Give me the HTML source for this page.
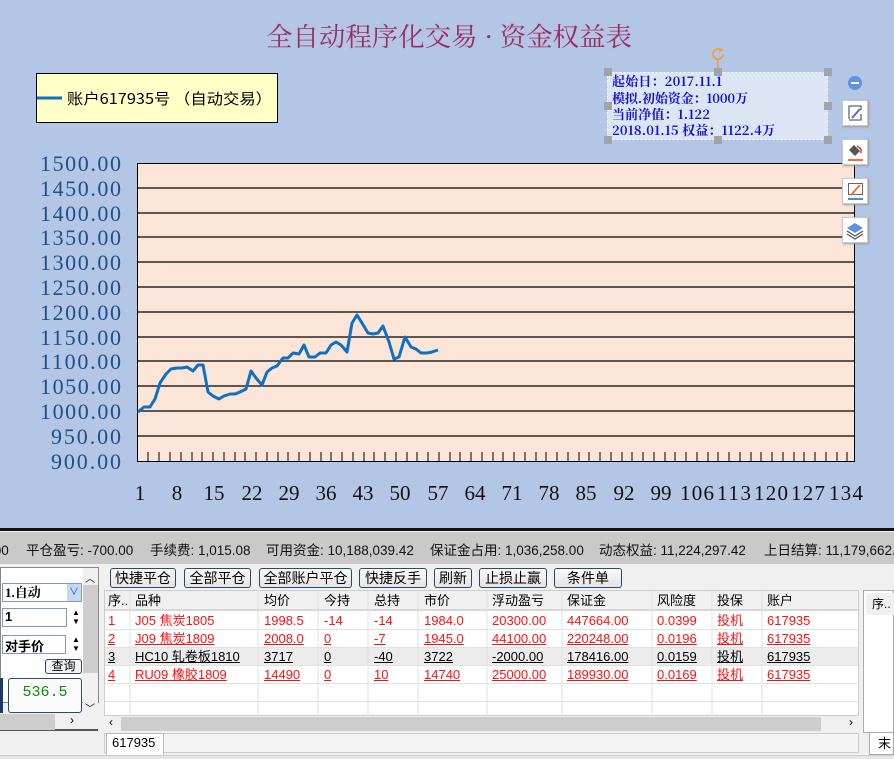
<!DOCTYPE html>
<html><head><meta charset="utf-8"><style>
*{margin:0;padding:0;box-sizing:border-box}
body{width:894px;height:759px;overflow:hidden;background:#b3c6e6;position:relative;font-family:"Liberation Sans","Noto Sans CJK SC",sans-serif}
.a{position:absolute}
.btn{position:absolute;top:568px;height:20px;border:1px solid #2a4a6a;border-radius:3px;background:linear-gradient(#fafafa,#e4e4e4);font-size:14px;text-align:center;line-height:18px;color:#000}
.c{position:absolute;font-size:13px;line-height:18px;white-space:nowrap}
.r{color:#ff1010}
.u{text-decoration:underline}
.sb{position:absolute;width:26px;height:26px;background:#fff;border:1px solid #c8c8c8;box-shadow:1px 1px 2px #999}
</style></head><body>
<svg class="a" style="left:0;top:0" width="894" height="531" viewBox="0 0 894 531">
<text x="266" y="46" textLength="366" lengthAdjust="spacingAndGlyphs" font-family="Noto Serif CJK SC,serif" font-size="26" fill="#9c2d62">全自动程序化交易 · 资金权益表</text>
<rect x="36.5" y="73.5" width="241" height="49" fill="#ffffc8" stroke="#000"/>
<line x1="37" y1="98" x2="62" y2="98" stroke="#0f6fc0" stroke-width="3"/>
<text x="67" y="104" textLength="205" lengthAdjust="spacingAndGlyphs" font-family="Noto Sans CJK SC,sans-serif" font-size="15" fill="#000">账户617935号 （自动交易）</text>
<rect x="137.5" y="163.5" width="717" height="298" fill="#fbe5d8" stroke="#000"/>
<g stroke="#000" stroke-width="1.3">
<line x1="137" y1="188" x2="855" y2="188"/><line x1="137" y1="213" x2="855" y2="213"/><line x1="137" y1="237" x2="855" y2="237"/><line x1="137" y1="262" x2="855" y2="262"/><line x1="137" y1="287" x2="855" y2="287"/><line x1="137" y1="312" x2="855" y2="312"/><line x1="137" y1="337" x2="855" y2="337"/><line x1="137" y1="361" x2="855" y2="361"/><line x1="137" y1="386" x2="855" y2="386"/><line x1="137" y1="411" x2="855" y2="411"/><line x1="137" y1="436" x2="855" y2="436"/>
</g>
<path stroke="#000" stroke-width="1" d="M148 452V461M159 452V461M170 452V461M181 452V461M192 452V461M202 452V461M213 452V461M224 452V461M235 452V461M245 452V461M256 452V461M267 452V461M278 452V461M288 452V461M299 452V461M310 452V461M321 452V461M331 452V461M342 452V461M353 452V461M364 452V461M374 452V461M385 452V461M396 452V461M407 452V461M417 452V461M428 452V461M439 452V461M450 452V461M460 452V461M471 452V461M482 452V461M493 452V461M503 452V461M514 452V461M525 452V461M536 452V461M546 452V461M557 452V461M568 452V461M579 452V461M589 452V461M600 452V461M611 452V461M622 452V461M632 452V461M643 452V461M654 452V461M665 452V461M675 452V461M686 452V461M697 452V461M708 452V461M718 452V461M729 452V461M740 452V461M751 452V461M761 452V461M772 452V461M783 452V461M794 452V461M804 452V461M815 452V461M826 452V461M837 452V461M847 452V461"/>
<polyline fill="none" stroke="#0f6fc0" stroke-width="3" stroke-linejoin="round" points="138,412 144,407 150,407 155,399 160,383 166,374 171,369 177,368 182,368 187,367 193,371 198,365 203,365 208,392 213,396 219,399 224,396 230,394 235,394 240,392 246,389 251,371 256,378 262,385 267,372 272,368 277,366 283,358 288,358 293,353 299,354 304,345 309,357 315,357 320,353 326,353 331,345 336,342 341,345 347,352 352,323 357,315 362,323 368,333 373,334 378,333 383,326 389,342 394,359 399,357 405,337 411,347 416,349 421,353 427,353 432,352 438,350"/>
<g font-family="Liberation Serif,serif" font-size="22" fill="#1f4f88" lengthAdjust="spacingAndGlyphs">
<text x="40" y="171" textLength="81">1500.00</text><text x="40" y="196" textLength="81">1450.00</text><text x="40" y="221" textLength="81">1400.00</text><text x="40" y="245" textLength="81">1350.00</text><text x="40" y="270" textLength="81">1300.00</text><text x="40" y="295" textLength="81">1250.00</text><text x="40" y="320" textLength="81">1200.00</text><text x="40" y="345" textLength="81">1150.00</text><text x="40" y="369" textLength="81">1100.00</text><text x="40" y="394" textLength="81">1050.00</text><text x="40" y="419" textLength="81">1000.00</text><text x="51" y="444" textLength="70">950.00</text><text x="51" y="469" textLength="70">900.00</text>
</g>
<g font-family="Liberation Serif,serif" font-size="21" fill="#111" text-anchor="middle">
<text x="140" y="500">1</text><text x="177" y="500">8</text><text x="214" y="500">15</text><text x="252" y="500">22</text><text x="289" y="500">29</text><text x="326" y="500">36</text><text x="363" y="500">43</text><text x="400" y="500">50</text><text x="438" y="500">57</text><text x="475" y="500">64</text><text x="512" y="500">71</text><text x="549" y="500">78</text><text x="586" y="500">85</text><text x="624" y="500">92</text><text x="661" y="500">99</text>
</g>
<g font-family="Liberation Serif,serif" font-size="21" fill="#111" lengthAdjust="spacingAndGlyphs">
<text x="680" y="500" textLength="34">106</text><text x="717" y="500" textLength="34">113</text><text x="754" y="500" textLength="34">120</text><text x="791" y="500" textLength="34">127</text><text x="829" y="500" textLength="34">134</text>
</g>
<rect x="607.5" y="72.5" width="220" height="67" fill="#dce5f3" stroke="#fff" stroke-dasharray="2,2"/>
<g fill="#a0a3aa"><rect x="604" y="68" width="8" height="8"/><rect x="714" y="68" width="8" height="8"/><rect x="824" y="68" width="8" height="8"/><rect x="604" y="102" width="8" height="8"/><rect x="824" y="102" width="8" height="8"/><rect x="604" y="136" width="8" height="8"/><rect x="714" y="136" width="8" height="8"/><rect x="824" y="136" width="8" height="8"/></g>
<line x1="718" y1="60" x2="718" y2="68" stroke="#f0a030" stroke-width="1.5"/>
<path d="M723 54a5 5 0 1 1-2-4" fill="none" stroke="#f0a030" stroke-width="1.8"/><path d="M719 48l3 2-3 2" fill="none" stroke="#f0a030" stroke-width="1.5"/>
<g font-family="Noto Serif CJK SC,serif" font-size="13" font-weight="bold" fill="#1010e0" lengthAdjust="spacingAndGlyphs">
<text x="612" y="86" textLength="110">起始日：2017.11.1</text><text x="612" y="103" textLength="136">模拟.初始资金：1000万</text><text x="612" y="119" textLength="98">当前净值：1.122</text><text x="612" y="135" textLength="163">2018.01.15 权益：1122.4万</text>
</g>
<circle cx="855" cy="83" r="7" fill="#5d96e0"/><rect x="851" y="82" width="8" height="2" fill="#fff"/>
<rect x="0" y="528" width="894" height="3" fill="#111"/>
</svg>
<div class="sb" style="left:842px;top:100px"><svg width="24" height="24"><path d="M6 18V5h12v4M6 19h12V13" fill="none" stroke="#666" stroke-width="1.3"/><path d="M9 17l8-9" stroke="#4a6fd0" stroke-width="2"/></svg></div>
<div class="sb" style="left:842px;top:139px"><svg width="24" height="24"><path d="M6 10l5-5 6 6-5 5z" fill="#555"/><path d="M14 6l4 3v4" fill="none" stroke="#d04040" stroke-width="1.5"/><rect x="5" y="19" width="15" height="2" fill="#f07030"/></svg></div>
<div class="sb" style="left:842px;top:178px"><svg width="24" height="24"><rect x="5.5" y="4.5" width="14" height="11" fill="none" stroke="#666"/><path d="M8 16l9-10" stroke="#f07030" stroke-width="2"/><rect x="5" y="19" width="15" height="2" fill="#4a90d0"/></svg></div>
<div class="sb" style="left:842px;top:217px"><svg width="24" height="24"><path d="M12 5l8 5-8 5-8-5z" fill="#5d90e0"/><path d="M4 13l8 5 8-5M4 16l8 5 8-5" fill="none" stroke="#555" stroke-width="1.3"/></svg></div>

<div class="a" style="left:0;top:531px;width:894px;height:228px;background:#f0f0f0"></div>
<div class="a" style="left:0;top:532px;width:894px;height:32px;background:#c9c9c9;font-size:13.5px;line-height:38px;white-space:nowrap;color:#111">
<span class="a" style="left:-10px">.00</span><span class="a" style="left:26px">平仓盈亏: -700.00</span><span class="a" style="left:150px">手续费: 1,015.08</span><span class="a" style="left:266px">可用资金: 10,188,039.42</span><span class="a" style="left:430px">保证金占用: 1,036,258.00</span><span class="a" style="left:599px">动态权益: 11,224,297.42</span><span class="a" style="left:764px">上日结算: 11,179,662.</span></div>
<div class="a" style="left:0;top:567px;width:99px;height:136px;border:1px solid #888;background:#fff"></div>
<div class="a" style="left:2px;top:583px;width:80px;height:19px;border:1px solid #7a9cc0;background:#fff;font-size:13px;font-weight:bold;font-family:'Liberation Serif','Noto Serif CJK SC',serif;padding-left:2px;line-height:17px">1.自动</div>
<div class="a" style="left:67px;top:584px;width:14px;height:17px;background:#c6d6f4;color:#3050a0;font-size:10px;text-align:center;line-height:17px">∨</div>
<div class="a" style="left:2px;top:608px;width:65px;height:19px;border:1px solid #7a9cc0;background:#fff;font-size:13px;font-weight:bold;padding-left:2px">1</div>
<div class="a" style="left:2px;top:635px;width:64px;height:19px;border:1px solid #7a9cc0;background:#fff;font-size:13px;font-weight:bold;padding-left:2px">对手价</div>
<div class="a" style="left:72px;top:608px;width:8px;height:20px;font-size:8px;line-height:9px">▲<br>▼</div>
<div class="a" style="left:72px;top:635px;width:8px;height:20px;font-size:8px;line-height:9px">▲<br>▼</div>
<div class="a" style="left:45px;top:659px;width:37px;height:15px;border:1px solid #2a4a6a;border-radius:3px;background:#f4f4f4;font-size:12px;text-align:center;line-height:13px">查询</div>
<div class="a" style="left:8px;top:678px;width:74px;height:35px;border:1px solid #2a4a6a;border-radius:3px;background:#fafafa;color:#108a10;font-family:'Liberation Mono',monospace;font-size:15px;text-align:center;line-height:28px">536.5</div>
<div class="a" style="left:0;top:678px;width:3px;height:35px;background:#1a3a6a"></div>
<div class="a" style="left:83px;top:568px;width:15px;height:145px;background:#f0f0f0"></div>
<div class="a" style="left:83px;top:585px;width:15px;height:88px;background:#cdcdcd"></div>
<div class="a" style="left:85px;top:570px;font-size:10px">︿</div><div class="a" style="left:85px;top:700px;font-size:10px">﹀</div>
<div class="a" style="left:0;top:713px;width:98px;height:18px;background:#f0f0f0;border-bottom:2px solid #555"></div>
<div class="a" style="left:0;top:714px;width:55px;height:16px;background:#cdcdcd"></div>
<div class="a" style="left:70px;top:713px;font-size:12px">›</div>
<div class="btn" style="left:110px;width:66px">快捷平仓</div>
<div class="btn" style="left:184px;width:67px">全部平仓</div>
<div class="btn" style="left:259px;width:93px">全部账户平仓</div>
<div class="btn" style="left:359px;width:68px">快捷反手</div>
<div class="btn" style="left:434px;width:38px">刷新</div>
<div class="btn" style="left:479px;width:68px">止损止赢</div>
<div class="btn" style="left:554px;width:68px">条件单</div>
<div class="a" style="left:104px;top:590px;width:755px;height:126px;background:#fff;border:1px solid #ccc"></div>
<div class="a" style="left:105px;top:591px;width:753px;height:20px;background:#f0f0f0;border-bottom:2px solid #d8d8d8"></div>
<div class="a" style="left:105px;top:647px;width:753px;height:18px;background:#ececec"></div>
<svg class="a" style="left:0;top:0" width="894" height="759"><g stroke="#e2e2e2"><line x1="130" y1="591" x2="130" y2="716"/><line x1="258" y1="591" x2="258" y2="716"/><line x1="318" y1="591" x2="318" y2="716"/><line x1="368" y1="591" x2="368" y2="716"/><line x1="418" y1="591" x2="418" y2="716"/><line x1="487" y1="591" x2="487" y2="716"/><line x1="562" y1="591" x2="562" y2="716"/><line x1="652" y1="591" x2="652" y2="716"/><line x1="712" y1="591" x2="712" y2="716"/><line x1="762" y1="591" x2="762" y2="716"/><line x1="105" y1="629.5" x2="858" y2="629.5"/><line x1="105" y1="647.5" x2="858" y2="647.5"/><line x1="105" y1="665.5" x2="858" y2="665.5"/><line x1="105" y1="683.5" x2="858" y2="683.5"/><line x1="105" y1="701.5" x2="858" y2="701.5"/></g></svg>
<div class="c" style="left:108px;top:592px">序..</div><div class="c" style="left:135px;top:592px">品种</div><div class="c" style="left:264px;top:592px">均价</div><div class="c" style="left:324px;top:592px">今持</div><div class="c" style="left:374px;top:592px">总持</div><div class="c" style="left:424px;top:592px">市价</div><div class="c" style="left:492px;top:592px">浮动盈亏</div><div class="c" style="left:567px;top:592px">保证金</div><div class="c" style="left:657px;top:592px">风险度</div><div class="c" style="left:717px;top:592px">投保</div><div class="c" style="left:767px;top:592px">账户</div>

<div class="c r" style="left:108px;top:612px">1</div><div class="c r" style="left:135px;top:612px">J05 焦炭1805</div><div class="c r" style="left:264px;top:612px">1998.5</div><div class="c r" style="left:324px;top:612px">-14</div><div class="c r" style="left:374px;top:612px">-14</div><div class="c r" style="left:424px;top:612px">1984.0</div><div class="c r" style="left:492px;top:612px">20300.00</div><div class="c r" style="left:567px;top:612px">447664.00</div><div class="c r" style="left:657px;top:612px">0.0399</div><div class="c r" style="left:717px;top:612px">投机</div><div class="c r" style="left:767px;top:612px">617935</div>

<div class="c r u" style="left:108px;top:630px">2</div><div class="c r u" style="left:135px;top:630px">J09 焦炭1809</div><div class="c r u" style="left:264px;top:630px">2008.0</div><div class="c r u" style="left:324px;top:630px">0</div><div class="c r u" style="left:374px;top:630px">-7</div><div class="c r u" style="left:424px;top:630px">1945.0</div><div class="c r u" style="left:492px;top:630px">44100.00</div><div class="c r u" style="left:567px;top:630px">220248.00</div><div class="c r u" style="left:657px;top:630px">0.0196</div><div class="c r u" style="left:717px;top:630px">投机</div><div class="c r u" style="left:767px;top:630px">617935</div>

<div class="c u" style="left:108px;top:648px">3</div><div class="c u" style="left:135px;top:648px">HC10 轧卷板1810</div><div class="c u" style="left:264px;top:648px">3717</div><div class="c u" style="left:324px;top:648px">0</div><div class="c u" style="left:374px;top:648px">-40</div><div class="c u" style="left:424px;top:648px">3722</div><div class="c u" style="left:492px;top:648px">-2000.00</div><div class="c u" style="left:567px;top:648px">178416.00</div><div class="c u" style="left:657px;top:648px">0.0159</div><div class="c u" style="left:717px;top:648px">投机</div><div class="c u" style="left:767px;top:648px">617935</div>

<div class="c r u" style="left:108px;top:666px">4</div><div class="c r u" style="left:135px;top:666px">RU09 橡胶1809</div><div class="c r u" style="left:264px;top:666px">14490</div><div class="c r u" style="left:324px;top:666px">0</div><div class="c r u" style="left:374px;top:666px">10</div><div class="c r u" style="left:424px;top:666px">14740</div><div class="c r u" style="left:492px;top:666px">25000.00</div><div class="c r u" style="left:567px;top:666px">189930.00</div><div class="c r u" style="left:657px;top:666px">0.0169</div><div class="c r u" style="left:717px;top:666px">投机</div><div class="c r u" style="left:767px;top:666px">617935</div>

<div class="a" style="left:104px;top:716px;width:755px;height:16px;background:#f0f0f0"></div>
<div class="a" style="left:121px;top:717px;width:700px;height:14px;background:#cdcdcd"></div>
<div class="a" style="left:109px;top:715px;font-size:12px">‹</div><div class="a" style="left:849px;top:715px;font-size:12px">›</div>
<div class="a" style="left:104px;top:733px;width:755px;height:20px;border:1px solid #ccc;background:#f4f4f4"></div>
<div class="a" style="left:106px;top:733px;width:58px;height:22px;background:#fff;border:1px solid #bbb;border-bottom:none;font-size:13px;line-height:18px;padding-left:5px">617935</div>
<div class="a" style="left:863px;top:590px;width:31px;height:143px;border:1px solid #aaa;background:#fff"></div>
<div class="a" style="left:866px;top:593px;width:28px;height:22px;background:#f0f0f0;font-size:12px;line-height:22px;padding-left:6px">序..</div>
<div class="a" style="left:869px;top:733px;width:25px;height:22px;border:1px solid #aaa;border-top:none;background:#fff;font-size:13px;padding-left:8px">末</div>
<div class="a" style="left:0;top:755px;width:894px;height:4px;background:#e6e6e6;border-top:1px solid #ccc"></div>
</body></html>
